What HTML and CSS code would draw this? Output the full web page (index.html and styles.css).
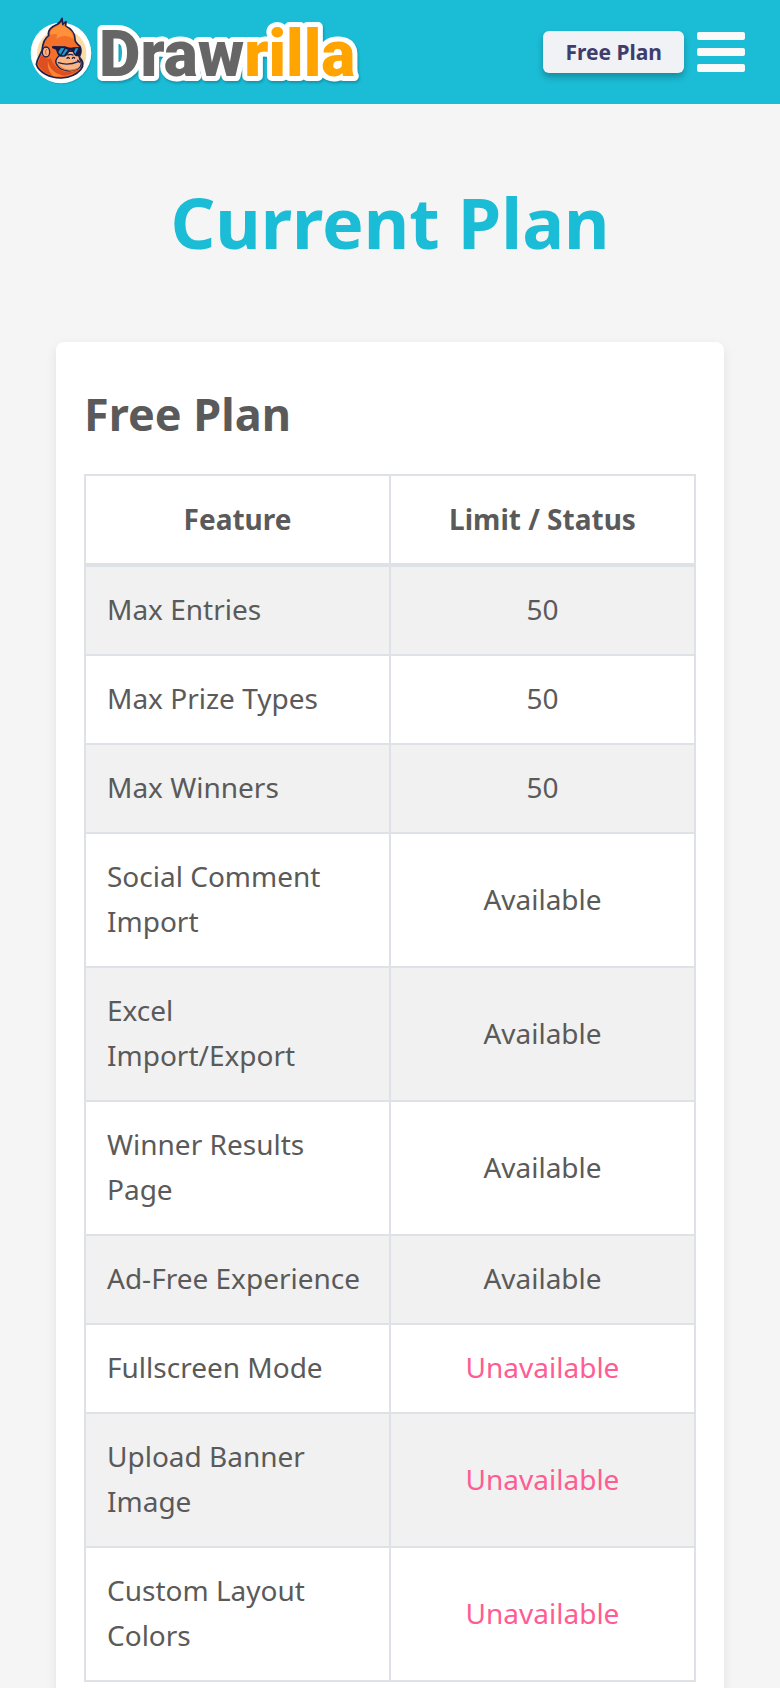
FILE: index.html
```html
<!DOCTYPE html>
<html lang="en">
<head>
<meta charset="utf-8">
<meta name="viewport" content="width=device-width, initial-scale=1">
<title>Drawrilla - Current Plan</title>
<link rel="stylesheet" href="styles.css">
</head>
<body>
<header class="topbar">
  <a class="brand" href="#" aria-label="Drawrilla home">
    <svg class="brand-logo" width="334" height="82" viewBox="30 10 334 82">
      <defs>
        <linearGradient id="word" gradientUnits="userSpaceOnUse" x1="0" y1="0" x2="488" y2="0">
          <stop offset="0.5" stop-color="#666"/>
          <stop offset="0.5" stop-color="#ffa400"/>
        </linearGradient>
      </defs>
      <g transform="translate(28 12) scale(0.3333)">
        <circle cx="102" cy="124" r="90" fill="#0f7f92" opacity=".4"/>
        <circle cx="99" cy="120" r="91" fill="#fff"/>
        <circle cx="101" cy="122" r="74" fill="#fbdca6"/>
        <path d="M25 154C27 136 38 124 42 112C44 92 49 76 62 68C58 50 70 42 88 34C96 30 99 24 102 16L104 34L114 26L113 40C128 46 141 60 141 78C140 86 146 92 156 100C162 114 158 124 154 132C166 144 168 158 158 170C146 184 124 193 100 195C66 196 32 178 25 154Z" fill="#f4702a" stroke="#1b2150" stroke-width="5" stroke-linejoin="round"/>
        <path d="M67 66C64 52 76 45 90 38L101 29L103 41L110 38C124 49 136 60 137 79C120 66 102 66 84 78C92 64 86 60 67 66Z" fill="#ff9138"/>
        <path d="M30 152C34 166 52 182 76 189C110 192 140 182 156 168C140 178 112 180 96 170C80 160 72 148 68 134C62 144 46 134 40 126Z" fill="#dd4f20"/>
        <path d="M76 190C60 174 58 158 60 144C64 170 84 184 108 188Z" fill="#ff8434"/>
        <ellipse cx="54" cy="117" rx="11" ry="15" fill="#fbb583" stroke="#1b2150" stroke-width="4"/>
        <path d="M56 108Q49 116 55 125" fill="none" stroke="#d7602d" stroke-width="3"/>
        <path d="M84 142C86 132 98 124 110 116L138 114C148 120 154 130 155 138C163 148 161 162 149 168C128 177 102 174 90 160C85 155 82 148 84 142Z" fill="#fbb583" stroke="#1b2150" stroke-width="4"/>
        <path d="M89 151C108 176 140 174 157 158C148 177 104 182 89 151Z" fill="#e77c49"/>
        <path d="M73 99L112 100C120 104 129 106 136 103L158 102C162 116 158 128 149 130C140 130 136 123 133 114C128 111 125 112 123 116C119 130 108 133 99 131C89 129 87 119 84 110L72 105Z" fill="#141a45"/>
        <path d="M99 105L109 106L97 125L91 117ZM113 107L120 110L108 127L101 127ZM143 106L151 106L142 123L138 117Z" fill="#229bc8"/>
        <path d="M120 126Q127 122 135 126M117 136Q120 130 124 136M133 136Q137 131 140 135M91 149Q119 159 151 146M149 142L155 148" fill="none" stroke="#1b2150" stroke-width="4" stroke-linecap="round"/>
      </g>
      <text class="brand-word" x="99" y="75" fill="url(#word)">Drawrilla</text>
    </svg>
  </a>
  <div class="actions">
    <button class="plan-button" type="button">Free Plan</button>
    <button class="menu-button" type="button" aria-label="Open menu">
      <span class="bar"></span><span class="bar"></span><span class="bar"></span>
    </button>
  </div>
</header>
<main class="page">
  <h1 class="page-title">Current Plan</h1>
  <section class="card">
    <h2 class="card-title">Free Plan</h2>
    <table class="plan-table">
      <thead>
        <tr><th scope="col">Feature</th><th scope="col">Limit / Status</th></tr>
      </thead>
      <tbody>
        <tr><td>Max Entries</td><td>50</td></tr>
        <tr><td>Max Prize Types</td><td>50</td></tr>
        <tr><td>Max Winners</td><td>50</td></tr>
        <tr><td>Social Comment Import</td><td>Available</td></tr>
        <tr><td>Excel Import/Export</td><td>Available</td></tr>
        <tr><td>Winner Results Page</td><td>Available</td></tr>
        <tr><td>Ad-Free Experience</td><td>Available</td></tr>
        <tr><td>Fullscreen Mode</td><td class="off">Unavailable</td></tr>
        <tr><td>Upload Banner Image</td><td class="off">Unavailable</td></tr>
        <tr><td>Custom Layout Colors</td><td class="off">Unavailable</td></tr>
      </tbody>
    </table>
  </section>
</main>
</body>
</html>
```
FILE: styles.css
```css
* {
  box-sizing: border-box;
}

body {
  margin: 0;
  background: #f5f5f5;
  color: #5a5a5a;
  font-family: "Noto Sans", sans-serif;
  font-size: 28px;
  line-height: 45px;
}

.topbar {
  display: flex;
  align-items: center;
  justify-content: space-between;
  padding: 11px 35px 11px 30px;
  background: #1bbcd5;
}

.brand,
.brand-logo {
  display: block;
}

.brand-word {
  font-family: Roboto, sans-serif;
  font-size: 64px;
  font-weight: 900;
  stroke: #fff;
  stroke-width: 10px;
  stroke-linejoin: round;
  paint-order: stroke;
  filter: drop-shadow(1px 2px 1px rgba(0, 60, 80, 0.3));
}

.actions {
  display: flex;
  align-items: center;
  gap: 13px;
}

.plan-button {
  padding: 6px 22px;
  border: 0;
  border-radius: 6px;
  background: #f0f2f5;
  box-shadow: 0 4px 6px rgba(0, 0, 0, 0.25);
  color: #3f3d6d;
  font-family: inherit;
  font-size: 21px;
  font-weight: 700;
  line-height: 30px;
}

.menu-button {
  display: grid;
  gap: 8px;
  width: 48px;
  padding: 0;
  border: 0;
  background: none;
}

.bar {
  height: 8px;
  border-radius: 2px;
  background: #fafafa;
}

.page {
  padding: 64px 56px 56px;
}

.page-title {
  margin: 0 0 66px;
  color: #1bbcd5;
  font-size: 70px;
  font-weight: 700;
  line-height: 108px;
  text-align: center;
}

.card {
  padding: 36px 28px;
  border-radius: 8px;
  background: #fff;
  box-shadow: 0 4px 12px rgba(0, 0, 0, 0.08);
}

.card-title {
  margin: 0 0 24px;
  font-size: 45px;
  font-weight: 700;
  line-height: 72px;
}

.plan-table {
  width: 100%;
  table-layout: fixed;
  border-collapse: collapse;
}

.plan-table th,
.plan-table td {
  padding: 21px;
  border: 2px solid #dee2e6;
  text-align: center;
}

.plan-table thead th {
  border-bottom-width: 4px;
}

.plan-table tbody td {
  padding: 20px 21px 22px;
}

.plan-table td:first-child {
  text-align: left;
}

.plan-table tbody tr:nth-child(odd) {
  background: #f1f1f1;
}

.plan-table .off {
  color: #ff5c93;
}
```
